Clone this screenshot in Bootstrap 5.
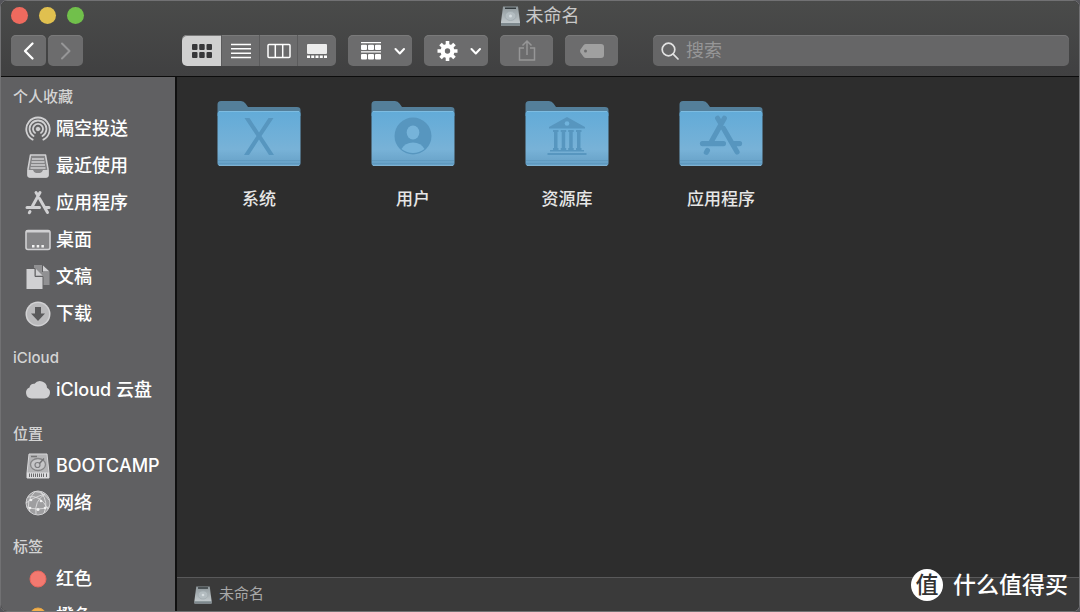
<!DOCTYPE html>
<html lang="zh-CN">
<head>
<meta charset="utf-8">
<meta name="viewport" content="width=device-width, initial-scale=1">
<title>未命名</title>
<link href="https://cdn.jsdelivr.net/npm/bootstrap@5.3.0/dist/css/bootstrap.min.css" rel="stylesheet">
<style>
body{font-family:Inter,"Noto Sans CJK SC",sans-serif;background:#55555a;color:#e4e4e4;-webkit-font-smoothing:antialiased}
svg{display:block;flex:none}
.finder{background:#2d2d2d;border:1px solid #717173;border-radius:7px}
.topbar{background:linear-gradient(#4a4b4a,#404041);border-bottom:1px solid #0c0c0c;padding:0 10px 10px}
.title-row{height:29px;margin-bottom:5px}
.title-text{font-size:18px;line-height:24px;color:#c8c8c8}
.lights{gap:11px}
.light{width:17px;height:17px;border-radius:50%;border:0;padding:0}
.light-close{background:#ee6a5e}.light-min{background:#e0c04f}.light-full{background:#71c04b}
.title-mid{gap:5px}
.tools{gap:12px}
.tool{--bs-btn-padding-x:0;--bs-btn-padding-y:0;--bs-btn-border-width:0;--bs-btn-bg:#6c6c6d;--bs-btn-hover-bg:#7b7b7c;--bs-btn-active-bg:#8a8a8a;--bs-btn-color:#fff;--bs-btn-hover-color:#fff;--bs-btn-border-radius:5px;--bs-btn-disabled-bg:#6c6c6d;--bs-btn-disabled-color:#969697;--bs-btn-disabled-opacity:1;height:31px;display:flex;align-items:center;justify-content:center;box-shadow:inset 0 1px #7a7a7a}
.w-nav{width:35px}.w-view{width:39px}.w-menu{width:64px}.w-act{width:53px}
.views .tool+.tool{border-left:1px solid #5b5b5c}
.views .w-view:first-child{width:40px}
.tool.picked{--bs-btn-bg:#d0d0d0;--bs-btn-hover-bg:#d0d0d0;--bs-btn-color:#38383a;--bs-btn-hover-color:#38383a}
.nav-area{width:159px;gap:2px}
.search-box{height:31px;background:#666667;border-radius:5px;padding:0 8px;gap:7px;box-shadow:inset 0 1px #767677;margin-left:23px}
.search-box input{background:transparent;border:0;outline:0;color:#fff;font-size:18px;line-height:24px;padding:0}
.search-box input::placeholder{color:#969697;opacity:1}
.side{width:176px;background:#606062;border-right:2px solid #101010;padding-top:9px}
.side h2{font-size:15px;line-height:22px;font-weight:500;color:#d4d4d4;margin:15px 0 2px 12px}
.side h2.top-head{margin-top:0}
.side a{height:37px;padding-left:24px;gap:5px;font-size:18px;line-height:24px;font-weight:500;color:#fff;text-decoration:none;white-space:nowrap}
.side svg{color:#d0d0d2}
.files{padding:23px 5px}
.file{width:154px;height:122px;color:#e6e6e6;font-size:17px;line-height:24px;gap:20px}
.file>span{font-weight:500}
.status{border-top:1px solid #59595a;background:#3a3a3a;height:34px;padding-left:17px;gap:7px;font-size:15px;color:#a8a8a8}
.stamp{right:12px;bottom:10px;gap:10px;font-size:23px;line-height:34px;color:#fff;font-weight:500;white-space:nowrap}
.stamp-dot{width:32px;height:32px;border-radius:50%;background:#fff;color:#333;font-size:23px;font-weight:500;line-height:32px}
</style>
</head>
<body class="vh-100 overflow-hidden">
<svg width="0" height="0" class="position-absolute" aria-hidden="true">
  <defs>
    <linearGradient id="front" x1="0" y1="0" x2="0" y2="1"><stop offset="0" stop-color="#62abd8"/><stop offset=".7" stop-color="#78b2d7"/><stop offset="1" stop-color="#659fc5"/></linearGradient>
    <linearGradient id="metal" x1="0" y1="0" x2="0" y2="1"><stop offset="0" stop-color="#8e979b"/><stop offset="1" stop-color="#c9d0d3"/></linearGradient>
    <symbol id="folder" viewBox="0 0 84 67">
      <path d="M.5 14V4.500Q.5 1 4 1H24Q27 1 28.500 3.500L31 7H80Q83.500 7 83.500 10V16H.5z" fill="#547f9a"/>
      <path d="M.5 14Q.5 11 3.500 11H80.500Q83.500 11 83.500 14V63Q83.500 66 80.500 66H3.500Q.5 66 .5 63z" fill="url(#front)"/>
      <path d="M2 11.500H82" stroke="#7dbce1"/><path d="M1 60.500H83M1 63.500H83" stroke="#5a94ba" opacity=".6"/>
      <path d="M2 65.500H82" stroke="#7fb2d2"/>
    </symbol>
    <symbol id="disk" viewBox="0 0 20 20">
      <path d="M2.500 .5H17.500L19.500 16V19.500H.5V16z" fill="url(#metal)"/><path d="M.5 17H19.500V19.500H.5z" fill="#7d888d"/>
      <path d="M4.500 2.300H15.500" stroke="#333a3d" stroke-width="1.600"/><ellipse cx="10" cy="10" rx="5.500" ry="4.500" fill="#b3bcc0" stroke="#a0aaae" stroke-width=".8"/><circle cx="10" cy="10" r="1.500" fill="#d5dcdf"/>
    </symbol>
    <symbol id="appmark" viewBox="0 0 26 26">
      <g fill="none" stroke="currentColor" stroke-width="3" stroke-linecap="round"><path d="M15 2.500L7.500 16M11 2.500L12.500 5M14.500 8.500L22.500 22.500M2 17.500H14.500M20.500 17.500H24M5 21.500L4.300 22.700"/></g>
    </symbol>
  </defs>
</svg>
<div class="finder h-100 d-flex flex-column overflow-hidden">
  <header class="topbar">
    <div class="title-row d-flex align-items-center position-relative">
      <div class="lights d-flex">
        <button class="light light-close" aria-label="关闭"></button>
        <button class="light light-min" aria-label="最小化"></button>
        <button class="light light-full" aria-label="全屏"></button>
      </div>
      <div class="title-mid position-absolute start-50 translate-middle-x d-flex align-items-center">
        <svg width="20" height="20"><use href="#disk"/></svg><span class="title-text">未命名</span>
      </div>
    </div>
    <div class="tools d-flex">
      <div class="nav-area d-flex flex-shrink-0">
        <button class="btn tool w-nav" aria-label="后退"><svg width="14" height="20" fill="none" stroke="currentColor" stroke-width="2.300" stroke-linecap="round" stroke-linejoin="round"><path d="M10.500 2.500L3 10L10.500 17.500"/></svg></button>
        <button class="btn tool w-nav" disabled aria-label="前进"><svg width="14" height="20" fill="none" stroke="currentColor" stroke-width="2" stroke-linecap="round" stroke-linejoin="round"><path d="M3 2.500L10.500 10L3 17.500"/></svg></button>
      </div>
      <div class="btn-group views flex-shrink-0">
        <button class="btn tool w-view picked" aria-label="图标"><svg width="20" height="16" fill="currentColor"><rect y="1" width="5.500" height="6" rx="1"/><rect x="7.200" y="1" width="5.500" height="6" rx="1"/><rect x="14.500" y="1" width="5.500" height="6" rx="1"/><rect y="9" width="5.500" height="6" rx="1"/><rect x="7.200" y="9" width="5.500" height="6" rx="1"/><rect x="14.500" y="9" width="5.500" height="6" rx="1"/></svg></button>
        <button class="btn tool w-view" aria-label="列表"><svg width="20" height="16" stroke="currentColor" stroke-width="1.500"><path d="M0 1.500H20M0 5.800H20M0 10.200H20M0 14.500H20"/></svg></button>
        <button class="btn tool w-view" aria-label="分栏"><svg width="24" height="16" fill="none" stroke="currentColor" stroke-width="1.500"><rect x="1" y="1.500" width="22" height="13" rx="1"/><path d="M8.300 1V15M15.700 1V15"/></svg></button>
        <button class="btn tool w-view" aria-label="画廊"><svg width="20" height="16" fill="currentColor"><rect y="1" width="20" height="10" rx="1" fill="#ececec"/><path d="M0 15V12.500H3V15zM4.200 15V12.500H7.200V15zM8.500 15V12.500H11.500V15zM12.800 15V12.500H15.800V15zM17 15V12.500H20V15z"/></svg></button>
      </div>
      <button class="btn tool w-menu flex-shrink-0" aria-label="分组"><svg width="50" height="20" viewBox="-5 0 50 20" fill="currentColor"><path d="M1 1H21V2.300H1zM1 10.200H21V11.500H1z"/><rect x="1" y="3.700" width="6" height="5.300" rx="1"/><rect x="8" y="3.700" width="6" height="5.300" rx="1"/><rect x="15" y="3.700" width="6" height="5.300" rx="1"/><rect x="1" y="13" width="6" height="5.500" rx="1"/><rect x="8" y="13" width="6" height="5.500" rx="1"/><rect x="15" y="13" width="6" height="5.500" rx="1"/><path d="M35.500 8L39.800 12.500L44 8" fill="none" stroke="currentColor" stroke-width="2" stroke-linecap="round" stroke-linejoin="round"/></svg></button>
      <button class="btn tool w-menu flex-shrink-0" aria-label="操作"><svg width="50" height="20" viewBox="-2 0 50 20"><g stroke="currentColor" stroke-width="3.600"><path d="M14.500 0V20M4.500 10H24.500M7.500 3L21.500 17M21.500 3L7.500 17"/></g><circle cx="14.500" cy="10" r="7" fill="currentColor"/><circle cx="14.500" cy="10" r="2.700" fill="#6c6c6d"/><path d="M38.500 8L42.800 12.500L47 8" fill="none" stroke="currentColor" stroke-width="2" stroke-linecap="round" stroke-linejoin="round"/></svg></button>
      <button class="btn tool w-act flex-shrink-0" disabled aria-label="共享"><svg width="18" height="24" fill="none" stroke="currentColor" stroke-width="1.500"><path d="M6 9H1.500V21H16.500V9H12M9 16V2.500M4.500 6.500L9 2L13.500 6.500"/></svg></button>
      <button class="btn tool w-act flex-shrink-0" disabled aria-label="标记"><svg width="26" height="16"><path d="M7 1H22Q25 1 25 4V12Q25 15 22 15H7Q5.500 15 4.500 13.800L1.500 9.500Q.5 8 1.500 6.500L4.500 2.200Q5.500 1 7 1z" fill="#a0a0a0"/><circle cx="6.500" cy="8" r="1.500" fill="#6c6c6d"/></svg></button>
      <label class="search-box d-flex align-items-center flex-grow-1"><svg width="18" height="20" fill="none" stroke="#e2e2e2" stroke-width="1.700" stroke-linecap="round"><circle cx="7.500" cy="8.500" r="6.300"/><path d="M12.200 13.200L17 18"/></svg><input class="flex-grow-1 w-100" type="search" placeholder="搜索" aria-label="搜索"></label>
    </div>
  </header>
  <div class="d-flex flex-grow-1 overflow-hidden">
    <nav class="side flex-shrink-0 overflow-hidden">
      <h2 class="top-head">个人收藏</h2>
      <a href="#" class="d-flex align-items-center"><svg width="26" height="26" fill="none" stroke="currentColor" stroke-width="1.800" stroke-linecap="round"><path d="M7.600 23.600A11.700 11.700 0 1 1 18.400 23.600M8.500 20A8.400 8.400 0 1 1 17.500 20M10 16.900A5 5 0 1 1 16 16.900"/><circle cx="13" cy="13" r="1.800" fill="currentColor" stroke-width="1"/></svg>隔空投送</a>
      <a href="#" class="d-flex align-items-center"><svg width="26" height="26"><path d="M5.500 2H20.500L23 16V22Q23 24 21 24H5Q3 24 3 22V16z" fill="#858587" stroke="currentColor" stroke-width="1.500" stroke-linejoin="round"/><path d="M7 6H19M6.500 9H19.500M6 12H20M5.500 15H20.500" stroke="currentColor" stroke-width="1.300"/><path d="M2.500 17H8Q9 20 11 20H15Q17 20 18 17H23.500V22Q23.500 24.500 21 24.500H5Q2.500 24.500 2.500 22z" fill="currentColor"/></svg>最近使用</a>
      <a href="#" class="d-flex align-items-center"><svg width="26" height="26"><use href="#appmark"/></svg>应用程序</a>
      <a href="#" class="d-flex align-items-center"><svg width="26" height="26"><rect x="1" y="3.500" width="24" height="19" rx="2" fill="#858587" stroke="currentColor" stroke-width="1.600"/><path d="M1 5.500V4Q1 3 2.500 3H23.500Q25 3 25 5.500z" fill="currentColor"/><path d="M7 18H9.500V20.500H7zM11.700 18H14.200V20.500H11.700zM16.400 18H18.900V20.500H16.400z" fill="#f2f2f2"/></svg>桌面</a>
      <a href="#" class="d-flex align-items-center"><svg width="26" height="26"><path d="M9 1H17V8H24.500V21H9z" fill="#909092"/><path d="M18 1.500L24.500 7.500H18z" fill="currentColor"/><path d="M1 4.500H10V12.500H18V25.500H1z" fill="currentColor" stroke="#606062"/><path d="M11 5L17.500 11.500H11z" fill="currentColor"/></svg>文稿</a>
      <a href="#" class="d-flex align-items-center"><svg width="26" height="26"><circle cx="13" cy="13" r="12.500" fill="#d2d2d4"/><circle cx="13" cy="13" r="11" fill="#bababc"/><path d="M10 6H16V12.500H20L13 20L6 12.500H10z" fill="#59595b"/></svg>下载</a>
      <h2>iCloud</h2>
      <a href="#" class="d-flex align-items-center"><svg width="26" height="26"><path d="M6.500 21.500A5.800 5.800 0 0 1 4.500 10.400A4.300 4.300 0 0 1 9.500 6.800A7 7 0 0 1 22 10.800A5.700 5.700 0 0 1 19.500 21.500z" fill="currentColor"/></svg>iCloud 云盘</a>
      <h2>位置</h2>
      <a href="#" class="d-flex align-items-center"><svg width="26" height="26"><path d="M4 1H22L24 20V25H2V20z" fill="#b4b4b6" stroke="#d8d8da"/><path d="M2 19.500H24V25H2z" fill="#dcdcde"/><path d="M4.500 20.500V24M6.500 20.500V24M8.500 20.500V24M10.500 20.500V24M12.500 20.500V24M14.500 20.500V24M16.500 20.500V24M18.500 20.500V24M21.500 20.500V24" stroke="#6a6a6c"/><ellipse cx="13" cy="11.500" rx="7.500" ry="6" fill="#c6c6c8" stroke="#858587" stroke-width="1.300"/><circle cx="12.500" cy="12" r="2.500" fill="none" stroke="#7d7d80" stroke-width="1.200"/><path d="M6 3.500H12M14.500 10.500L19 5.500" stroke="#747476" stroke-width="1.500"/></svg>BOOTCAMP</a>
      <a href="#" class="d-flex align-items-center"><svg width="26" height="26"><circle cx="13" cy="13" r="12" fill="#9e9ea0" stroke="currentColor"/><path d="M10 1.500Q0 12 5 22M10 1.500Q19 2 24 10M3 7Q15 4 23 19M1 13Q7 8 20 4M2 17Q12 21 24 17M20 4Q9 11 11 24M16 2Q24 13 19 23" fill="none" stroke="#dcdcde" stroke-width=".9"/><g fill="#eee"><circle cx="6" cy="10" r="1.300"/><circle cx="13" cy="19.500" r="1.500"/><circle cx="16" cy="11" r="1.300"/><circle cx="20" cy="18" r="1.300"/><circle cx="5" cy="18" r="1.300"/></g></svg>网络</a>
      <h2>标签</h2>
      <a href="#" class="d-flex align-items-center"><svg width="26" height="26"><circle cx="13" cy="13" r="8" fill="#f37970" stroke="#e8665d"/></svg>红色</a>
      <a href="#" class="d-flex align-items-center"><svg width="26" height="26"><circle cx="13" cy="13" r="8" fill="#f3b04f" stroke="#e5a340"/></svg>橙色</a>
    </nav>
    <main class="flex-grow-1 d-flex flex-column">
      <div class="files flex-grow-1 d-flex flex-wrap align-content-start">
        <div class="file d-flex flex-column align-items-center"><svg width="84" height="67" viewBox="0 0 84 67"><use href="#folder"/><path d="M27.500 18H32.500L42 32.500L51.500 18H56.500L44.500 36L57 55H52L42 39.500L32 55H27L39.500 36z" fill="#5796bf"/></svg><span>系统</span></div>
        <div class="file d-flex flex-column align-items-center"><svg width="84" height="67" viewBox="0 0 84 67"><use href="#folder"/><circle cx="42" cy="36" r="18.500" fill="#5796bf"/><ellipse cx="42" cy="32.500" rx="6.300" ry="7" fill="#76b3d9"/><path d="M30.500 49Q34 42.500 42 42.500T53.500 49Q48 53 42 53T30.500 49z" fill="#76b3d9"/></svg><span>用户</span></div>
        <div class="file d-flex flex-column align-items-center"><svg width="84" height="67" viewBox="0 0 84 67"><use href="#folder"/><g fill="#5796bf"><path d="M42 17L60 27V28.500H24V27z"/><path d="M28 30H33.500V32H32.500V48H33.500V50H28V48H29V32H28zM35.700 30H41.200V32H40.200V48H41.200V50H35.700V48H36.700V32H35.700zM43.200 30H48.700V32H47.700V48H48.700V50H43.200V48H44.200V32H43.200zM51 30H56.500V32H55.500V48H56.500V50H51V48H52V32H51zM25 50H59V51.500H25zM22.500 53H61.500V55H22.500z"/></g><circle cx="42" cy="23.500" r="2.300" fill="#70b3dc"/></svg><span>资源库</span></div>
        <div class="file d-flex flex-column align-items-center"><svg width="84" height="67" viewBox="0 0 84 67" color="#5796bf"><use href="#folder"/><use href="#appmark" x="20" y="14" width="44" height="44"/></svg><span>应用程序</span></div>
      </div>
      <footer class="status d-flex align-items-center"><svg width="18" height="18"><use href="#disk"/></svg>未命名</footer>
    </main>
  </div>
</div>
<div class="stamp position-absolute d-flex align-items-center"><span class="stamp-dot text-center">值</span><span>什么值得买</span></div>
<script src="https://cdn.jsdelivr.net/npm/bootstrap@5.3.0/dist/js/bootstrap.bundle.min.js"></script>
</body>
</html>
